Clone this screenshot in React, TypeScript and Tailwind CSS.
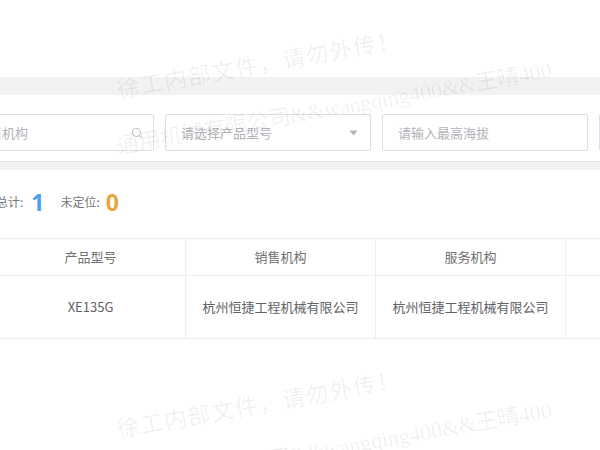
import React from "react";

function SearchIcon() {
  return (
    <svg width="12" height="12" viewBox="0 0 12 12" fill="none" stroke="#c0c4cc" strokeWidth="1.1">
      <circle cx="5.5" cy="5.5" r="4" />
      <path d="M8.5 8.5 L10.5 10.5" />
    </svg>
  );
}

function Caret() {
  return (
    <svg width="9" height="6" viewBox="0 0 9 6">
      <path d="M0.5 0.5 L8.5 0.5 L4.5 5.5 Z" fill="#b4b4b4" />
    </svg>
  );
}

function Watermark({ top }: { top: number }) {
  return (
    <>
      <div
        className="absolute left-[117px] h-[26px] leading-[26px] whitespace-nowrap origin-left -rotate-[10deg] text-[23px] tracking-[1px] text-black/[0.065] pointer-events-none font-['Liberation_Serif','Noto_Sans_CJK_SC',serif]"
        style={{ top: top - 13 }}
      >
        徐工内部文件，请勿外传！
      </div>
      <div
        className="absolute left-[117px] h-[26px] leading-[26px] whitespace-nowrap origin-left -rotate-[10deg] text-[22px] text-black/[0.065] pointer-events-none font-['Liberation_Serif','Noto_Sans_CJK_SC',serif]"
        style={{ top: top + 43 }}
      >
        通用机械有限公司&amp;&amp;wangqing400&amp;&amp;王晴400
      </div>
    </>
  );
}

export default function App() {
  const cell =
    "w-[190px] shrink-0 flex items-center justify-center border-r border-[#ebeef5]";
  return (
    <div className="relative w-[600px] h-[450px] overflow-hidden bg-[#f2f2f2] flex flex-col font-['Noto_Sans_CJK_SC','Noto_Sans',sans-serif]">
      <div className="h-[77px] shrink-0 bg-white" />
      <div className="mt-[18px] h-[67px] shrink-0 bg-white border-b border-[#e3e3e3] pt-[19px]">
        <div className="flex gap-[11px] ml-[-79px]">
          <div className="w-[233px] h-[37px] shrink-0 border border-[#dcdfe6] rounded-[2px] bg-white flex items-center justify-between pl-[15px] pr-[10px]">
            <span className="text-[13px] text-[#b0b3b8]">请输入销售机构</span>
            <SearchIcon />
          </div>
          <div className="w-[206px] h-[37px] shrink-0 border border-[#dcdfe6] rounded-[2px] bg-white flex items-center justify-between pl-[15px] pr-[12px]">
            <span className="text-[13px] text-[#b0b3b8]">请选择产品型号</span>
            <Caret />
          </div>
          <div className="w-[206px] h-[37px] shrink-0 border border-[#dcdfe6] rounded-[2px] bg-white flex items-center pl-[15px]">
            <span className="text-[13px] text-[#b0b3b8]">请输入最高海拔</span>
          </div>
          <div className="w-[206px] h-[37px] shrink-0 border border-[#dcdfe6] rounded-[2px] bg-white" />
        </div>
      </div>
      <div className="mt-[8px] flex-1 bg-white pt-[20px]">
        <div className="flex items-center h-[24px] ml-[-4px]">
          <span className="text-[12px] text-[#777]">总计:</span>
          <span className="ml-[8px] text-[23px] font-bold leading-none text-[#4a9ff0] font-['Noto_Sans',sans-serif]">1</span>
          <span className="ml-[16px] text-[12px] text-[#777]">未定位:</span>
          <span className="ml-[6px] text-[23px] font-bold leading-none text-[#e8a640] font-['Noto_Sans',sans-serif]">0</span>
        </div>
        <div className="mt-[24px] border-t border-[#ebeef5] ml-[-4px]">
          <div className="flex h-[37px] border-b border-[#ebeef5] text-[13px] text-[#707070]">
            <div className={cell}>产品型号</div>
            <div className={cell}>销售机构</div>
            <div className={cell}>服务机构</div>
            <div className={cell}></div>
          </div>
          <div className="flex h-[63px] border-b border-[#ebeef5] text-[13px] text-[#606266]">
            <div className={cell}>XE135G</div>
            <div className={cell}>杭州恒捷工程机械有限公司</div>
            <div className={cell}>杭州恒捷工程机械有限公司</div>
            <div className={cell}></div>
          </div>
        </div>
      </div>
      <Watermark top={91} />
      <Watermark top={431} />
    </div>
  );
}
